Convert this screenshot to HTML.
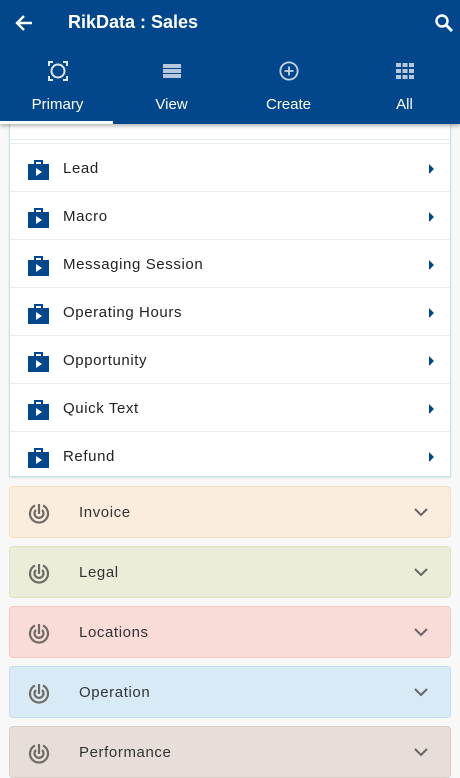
<!DOCTYPE html>
<html><head><style>
*{margin:0;padding:0;box-sizing:border-box}
body{width:460px;height:772px;overflow:hidden;background:#f8f8f8;font-family:"Liberation Sans",sans-serif;position:relative}
.hdr{position:absolute;left:0;top:0;width:460px;height:124px;background:#02468c;color:#fff;box-shadow:0 2px 4px rgba(0,0,0,.3);z-index:2}
.title{position:absolute;left:68px;top:12px;font-size:18px;font-weight:bold}
.tab{position:absolute;top:61px;width:115px;text-align:center;font-size:15px;line-height:17px}
.tab svg{display:block;margin:0 auto 15px}
.ul{position:absolute;left:0;top:121px;width:113px;height:3px;background:#fff}
.card{position:absolute;left:9px;top:124px;width:442px;height:353px;background:#fff;border:1px solid #bfe6ec;border-top:none;box-shadow:0 1px 2px rgba(0,0,0,.1)}
.row{position:absolute;left:0;width:440px;height:48px;border-top:1px solid #e6eded;font-size:15px;color:#222;letter-spacing:.6px}
.row span{position:absolute;left:53px;top:16px}
.row .ic{position:absolute;left:18px;top:16px}
.row .ar{position:absolute;right:16px;top:20px;width:0;height:0;border-left:5px solid #02468c;border-top:5px solid transparent;border-bottom:5px solid transparent}
.acc{position:absolute;left:9px;width:442px;height:52px;border-radius:4px;font-size:15px;color:#333;letter-spacing:.6px}
.acc span{position:absolute;left:69px;top:17px}
.acc svg.r{position:absolute;left:18px;top:15px}
.acc svg.c{position:absolute;right:22px;top:20px}
</style></head><body>
<div class="hdr">
<svg style="position:absolute;left:14px;top:13px" width="20" height="20" viewBox="0 0 20 20"><path d="M18 10H4M10 3L3 10l7 7" stroke="#fff" stroke-width="2.4" fill="none"/></svg>
<div class="title">RikData : Sales</div>
<svg style="position:absolute;left:434px;top:13px" width="20" height="20" viewBox="0 0 20 20"><circle cx="8" cy="8" r="5.5" stroke="#fff" stroke-width="2.4" fill="none"/><path d="M12 12l6 6" stroke="#fff" stroke-width="3"/></svg>
<div class="tab" style="left:0"><svg width="20" height="20" viewBox="0 0 20 20"><circle cx="10" cy="10" r="6.5" stroke="#dfe6ef" stroke-width="2" fill="none"/><path d="M1 5V1h4M15 1h4v4M19 15v4h-4M5 19H1v-4" stroke="#dfe6ef" stroke-width="2" fill="none"/></svg>Primary</div>
<div class="tab" style="left:114px"><svg width="20" height="20" viewBox="0 0 20 20" fill="#b8c8dc"><rect x="1" y="3" width="18" height="4"/><rect x="1" y="8" width="18" height="4"/><rect x="1" y="13" width="18" height="4"/></svg>View</div>
<div class="tab" style="left:231px"><svg width="22" height="20" viewBox="0 0 22 22"><circle cx="11" cy="11" r="9.5" stroke="#c8d4e2" stroke-width="2" fill="none"/><path d="M11 6v10M6 11h10" stroke="#c8d4e2" stroke-width="2"/></svg>Create</div>
<div class="tab" style="left:347px"><svg width="18" height="20" viewBox="0 0 18 18" fill="#b8c8dc"><rect x="0" y="1" width="5" height="4"/><rect x="6.5" y="1" width="5" height="4"/><rect x="13" y="1" width="5" height="4"/><rect x="0" y="7" width="5" height="4"/><rect x="6.5" y="7" width="5" height="4"/><rect x="13" y="7" width="5" height="4"/><rect x="0" y="13" width="5" height="4"/><rect x="6.5" y="13" width="5" height="4"/><rect x="13" y="13" width="5" height="4"/></svg>All</div>
<div class="ul"></div>
</div>
<div class="card">
<div class="row" style="top:15px;height:1px"></div>
<div class="row" style="top:19px"><svg class="ic" width="21" height="20" viewBox="0 0 21 20"><path d="M7 4V1h7v3" stroke="#02468c" stroke-width="2" fill="none"/><rect x="0" y="4" width="21" height="16" fill="#02468c"/><path d="M8 8v8l6-4z" fill="#fff"/></svg><span>Lead</span><i class="ar"></i></div>
<div class="row" style="top:67px"><svg class="ic" width="21" height="20" viewBox="0 0 21 20"><path d="M7 4V1h7v3" stroke="#02468c" stroke-width="2" fill="none"/><rect x="0" y="4" width="21" height="16" fill="#02468c"/><path d="M8 8v8l6-4z" fill="#fff"/></svg><span>Macro</span><i class="ar"></i></div>
<div class="row" style="top:115px"><svg class="ic" width="21" height="20" viewBox="0 0 21 20"><path d="M7 4V1h7v3" stroke="#02468c" stroke-width="2" fill="none"/><rect x="0" y="4" width="21" height="16" fill="#02468c"/><path d="M8 8v8l6-4z" fill="#fff"/></svg><span>Messaging Session</span><i class="ar"></i></div>
<div class="row" style="top:163px"><svg class="ic" width="21" height="20" viewBox="0 0 21 20"><path d="M7 4V1h7v3" stroke="#02468c" stroke-width="2" fill="none"/><rect x="0" y="4" width="21" height="16" fill="#02468c"/><path d="M8 8v8l6-4z" fill="#fff"/></svg><span>Operating Hours</span><i class="ar"></i></div>
<div class="row" style="top:211px"><svg class="ic" width="21" height="20" viewBox="0 0 21 20"><path d="M7 4V1h7v3" stroke="#02468c" stroke-width="2" fill="none"/><rect x="0" y="4" width="21" height="16" fill="#02468c"/><path d="M8 8v8l6-4z" fill="#fff"/></svg><span>Opportunity</span><i class="ar"></i></div>
<div class="row" style="top:259px"><svg class="ic" width="21" height="20" viewBox="0 0 21 20"><path d="M7 4V1h7v3" stroke="#02468c" stroke-width="2" fill="none"/><rect x="0" y="4" width="21" height="16" fill="#02468c"/><path d="M8 8v8l6-4z" fill="#fff"/></svg><span>Quick Text</span><i class="ar"></i></div>
<div class="row" style="top:307px"><svg class="ic" width="21" height="20" viewBox="0 0 21 20"><path d="M7 4V1h7v3" stroke="#02468c" stroke-width="2" fill="none"/><rect x="0" y="4" width="21" height="16" fill="#02468c"/><path d="M8 8v8l6-4z" fill="#fff"/></svg><span>Refund</span><i class="ar"></i></div>
</div>
<div class="acc" style="top:486px;background:#fbeddd;border:1px solid #f7dfc2"><svg class="r" width="22" height="22" viewBox="0 0 22 22" fill="none" stroke="#6e6a64" stroke-width="2.2"><path d="M7 3.5A9 9 0 1 0 15 3.5"/><path d="M8 8A4.5 4.5 0 1 0 14 8"/><path d="M11 2v10"/></svg><span>Invoice</span><svg class="c" width="14" height="10" viewBox="0 0 14 10"><path d="M1 2l6 6 6-6" stroke="#666" stroke-width="2" fill="none"/></svg></div>
<div class="acc" style="top:546px;background:#ecedd9;border:1px solid #dfe2c2"><svg class="r" width="22" height="22" viewBox="0 0 22 22" fill="none" stroke="#6e6a64" stroke-width="2.2"><path d="M7 3.5A9 9 0 1 0 15 3.5"/><path d="M8 8A4.5 4.5 0 1 0 14 8"/><path d="M11 2v10"/></svg><span>Legal</span><svg class="c" width="14" height="10" viewBox="0 0 14 10"><path d="M1 2l6 6 6-6" stroke="#666" stroke-width="2" fill="none"/></svg></div>
<div class="acc" style="top:606px;background:#f9dcd7;border:1px solid #f2c8c1"><svg class="r" width="22" height="22" viewBox="0 0 22 22" fill="none" stroke="#6e6a64" stroke-width="2.2"><path d="M7 3.5A9 9 0 1 0 15 3.5"/><path d="M8 8A4.5 4.5 0 1 0 14 8"/><path d="M11 2v10"/></svg><span>Locations</span><svg class="c" width="14" height="10" viewBox="0 0 14 10"><path d="M1 2l6 6 6-6" stroke="#666" stroke-width="2" fill="none"/></svg></div>
<div class="acc" style="top:666px;background:#d9eaf7;border:1px solid #c2dbef"><svg class="r" width="22" height="22" viewBox="0 0 22 22" fill="none" stroke="#6e6a64" stroke-width="2.2"><path d="M7 3.5A9 9 0 1 0 15 3.5"/><path d="M8 8A4.5 4.5 0 1 0 14 8"/><path d="M11 2v10"/></svg><span>Operation</span><svg class="c" width="14" height="10" viewBox="0 0 14 10"><path d="M1 2l6 6 6-6" stroke="#666" stroke-width="2" fill="none"/></svg></div>
<div class="acc" style="top:726px;background:#e7deda;border:1px solid #d8ccc6"><svg class="r" width="22" height="22" viewBox="0 0 22 22" fill="none" stroke="#6e6a64" stroke-width="2.2"><path d="M7 3.5A9 9 0 1 0 15 3.5"/><path d="M8 8A4.5 4.5 0 1 0 14 8"/><path d="M11 2v10"/></svg><span>Performance</span><svg class="c" width="14" height="10" viewBox="0 0 14 10"><path d="M1 2l6 6 6-6" stroke="#666" stroke-width="2" fill="none"/></svg></div>
</body></html>
